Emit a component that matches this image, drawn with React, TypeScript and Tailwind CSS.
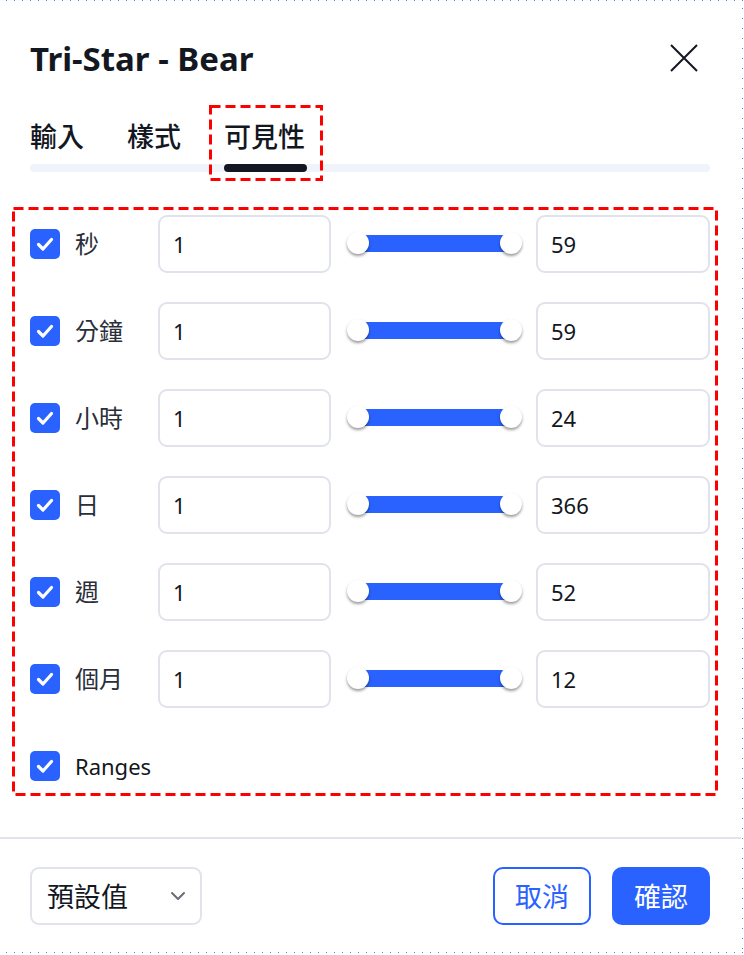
import React from "react";

const rows = [
  { label: "秒", max: "59" },
  { label: "分鐘", max: "59" },
  { label: "小時", max: "24" },
  { label: "日", max: "366" },
  { label: "週", max: "52" },
  { label: "個月", max: "12" },
];

function Check() {
  return (
    <div className="w-[30px] h-[30px] rounded-[5px] bg-[#2962ff] flex items-center justify-center shrink-0">
      <svg width="30" height="30" viewBox="0 0 30 30">
        <path d="M8.5 15.5 L13 20 L21.5 10.5" fill="none" stroke="#fff" strokeWidth="3.2" strokeLinecap="round" strokeLinejoin="round" />
      </svg>
    </div>
  );
}

function Field({ value, w }: { value: string; w: string }) {
  return (
    <div className={`${w} h-[58px] rounded-[9px] border-2 border-[#e0e3eb] flex items-center pl-[13px] text-[22px] text-[#131722] shrink-0`}>
      {value}
    </div>
  );
}

function Slider() {
  return (
    <div className="relative w-[205px] h-[26px] shrink-0">
      <div className="absolute left-[27px] right-[25px] top-[4px] h-[17px] bg-[#2962ff]" />
      <div className="absolute left-[16px] top-[1px] w-[22px] h-[22px] rounded-full bg-white shadow-[0_2px_3px_rgba(0,0,0,0.4)]" />
      <div className="absolute left-[169px] top-[1px] w-[22px] h-[22px] rounded-full bg-white shadow-[0_2px_3px_rgba(0,0,0,0.4)]" />
    </div>
  );
}

function DashedBox({ className, w, h }: { className: string; w: number; h: number }) {
  return (
    <svg className={className} width={w} height={h} viewBox={`0 0 ${w} ${h}`}>
      <rect x="1.5" y="1.5" width={w - 3} height={h - 3} fill="none" stroke="#ff0000" strokeWidth="3" strokeDasharray="10 5" />
    </svg>
  );
}

export default function App() {
  return (
    <div
      className="relative w-[744px] h-[955px] bg-white overflow-hidden text-[#131722]"
      style={{ fontFamily: '"Noto Sans", "Noto Sans CJK TC", sans-serif' }}
    >
      {/* header */}
      <div className="h-[116px] flex items-center justify-between pl-[30px] pr-[46px]">
        <div className="text-[33px] font-bold leading-none">Tri-Star - Bear</div>
        <svg width="28" height="28" viewBox="0 0 28 28">
          <path d="M1 1 L27 27 M27 1 L1 27" stroke="#131722" strokeWidth="2" fill="none" />
        </svg>
      </div>

      {/* tabs */}
      <div className="pl-[30px] pr-[34px]">
        <div className="h-[40px] flex items-center gap-[43px] text-[27px] font-medium leading-none">
          <span>輸入</span>
          <span>樣式</span>
          <span>可見性</span>
        </div>
        <div className="mt-[8px] h-[8px] rounded-full bg-[#f0f3fa] flex">
          <div className="w-[194px]" />
          <div className="w-[83px] h-[8px] rounded-full bg-[#131722]" />
        </div>
      </div>

      {/* rows */}
      <div className="mt-[43px] pl-[30px] pr-[34px] flex flex-col gap-[29px]">
        {rows.map((r) => (
          <div key={r.label} className="h-[58px] flex items-center">
            <Check />
            <div className="w-[98px] pl-[15px] text-[24px] text-[#2a2e39] leading-none shrink-0">{r.label}</div>
            <Field value="1" w="w-[173px]" />
            <Slider />
            <Field value={r.max} w="w-[174px]" />
          </div>
        ))}
        <div className="h-[58px] flex items-center">
          <Check />
          <div className="pl-[15px] text-[22px] leading-none">Ranges</div>
        </div>
      </div>

      {/* divider */}
      <div className="mt-[42px] h-[2px] w-[741px] bg-[#e0e3eb]" />

      {/* footer */}
      <div className="mt-[28px] pl-[30px] pr-[34px] flex items-center justify-between">
        <div className="w-[172px] h-[58px] rounded-[9px] border-2 border-[#e0e3eb] flex items-center justify-between pl-[15px] pr-[13px]">
          <span className="text-[27px] text-[#131722] leading-none">預設值</span>
          <svg width="18" height="18" viewBox="0 0 18 18">
            <path d="M3 6 L9 12 L15 6" stroke="#6a6d78" strokeWidth="2" fill="none" strokeLinecap="round" strokeLinejoin="round" />
          </svg>
        </div>
        <div className="flex items-center gap-[21px]">
          <div className="w-[98px] h-[58px] rounded-[10px] border-2 border-[#2962ff] text-[#2962ff] text-[27px] flex items-center justify-center leading-none">
            取消
          </div>
          <div className="w-[98px] h-[58px] rounded-[10px] bg-[#2962ff] text-white text-[27px] flex items-center justify-center leading-none">
            確認
          </div>
        </div>
      </div>

      {/* annotation overlays */}
      <DashedBox className="absolute left-[209px] top-[105px]" w={114} h={76} />
      <DashedBox className="absolute left-[12px] top-[207px]" w={706} h={589} />

      {/* dotted frame */}
      <div className="absolute left-0 top-0 w-[744px] h-[1px] bg-[repeating-linear-gradient(to_right,transparent_0_6px,#4a90e2_6px_7px,transparent_7px_8px)]" />
      <div className="absolute left-0 top-[952px] w-[744px] h-[1px] bg-[repeating-linear-gradient(to_right,transparent_0_6px,#4a90e2_6px_7px,transparent_7px_8px)]" />
      <div className="absolute left-[742px] top-0 w-[1px] h-[955px] bg-[repeating-linear-gradient(to_bottom,transparent_0_8px,#4a90e2_8px_9px,transparent_9px_10px)]" />
    </div>
  );
}
